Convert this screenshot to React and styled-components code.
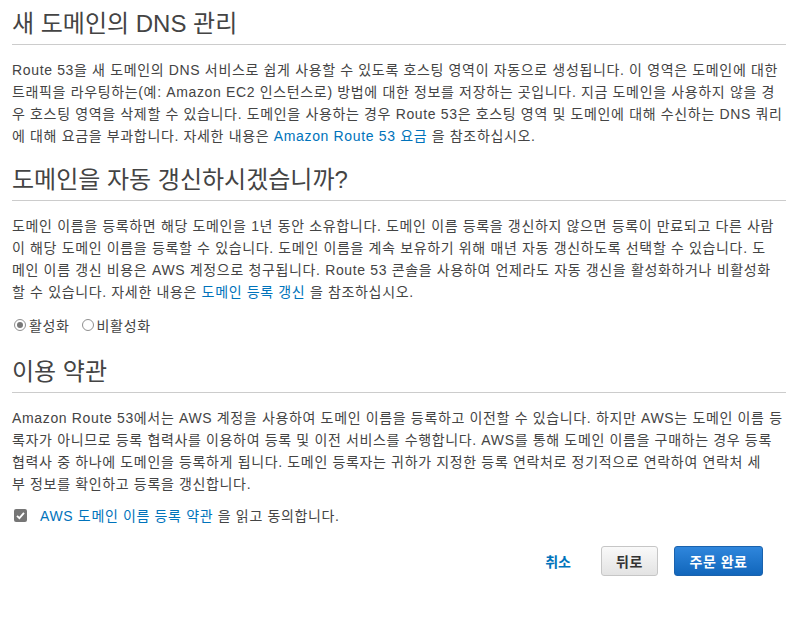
import React, { useState } from "react";
import styled, { createGlobalStyle } from "styled-components";

const GlobalStyle = createGlobalStyle`
  body {
    margin: 0;
    background: #fff;
    font-family: "Liberation Sans", "Noto Sans CJK KR", sans-serif;
    color: #444;
  }
`;

const Page = styled.div`
  padding: 0 19px 40px 12px;
  font-size: 14px;
`;

const Heading = styled.h2`
  margin: ${(p) => (p.$first ? "8px" : p.$gap || "17px")} 0 0;
  padding: 0 0 4px 0;
  border-bottom: 1px solid #ccc;
  font-size: 24px;
  font-weight: 400;
  line-height: 32px;
  color: #444;
`;

// hangul in the reference runs a bit wider than Noto CJK at 14px
const Para = styled.p`
  margin: 14px 0 0;
  line-height: 22px;
  letter-spacing: 0.65px;
`;

const Link = styled.a`
  color: #0073bb;
  text-decoration: none;
  cursor: pointer;
`;

const OptionRow = styled.div`
  display: flex;
  align-items: center;
  gap: 12px;
  margin: 12px 0 0 2px;
  height: 20px;
  letter-spacing: 0.65px;
`;

const RadioLabel = styled.label`
  display: flex;
  align-items: center;
  gap: 3px;
  cursor: pointer;
`;

const RadioDot = styled.span`
  width: 12px;
  height: 12px;
  box-sizing: border-box;
  border-radius: 50%;
  border: 1px solid #8f8f8f;
  background: #fff;
  display: flex;
  align-items: center;
  justify-content: center;

  &::after {
    content: "";
    width: 6px;
    height: 6px;
    border-radius: 50%;
    background: ${(p) => (p.$on ? "#777" : "transparent")};
  }
`;

const CheckRow = styled.label`
  display: flex;
  align-items: center;
  gap: 13px;
  margin: 10px 0 0 2px;
  height: 20px;
  letter-spacing: 0.65px;
  cursor: pointer;
`;

const CheckBox = styled.span`
  width: 13px;
  height: 13px;
  border-radius: 2px;
  background: #767676;
  display: flex;
  align-items: center;
  justify-content: center;
`;

const Actions = styled.div`
  display: flex;
  justify-content: flex-end;
  align-items: center;
  gap: 16px;
  margin-top: 21px;
  padding-right: 23px;
`;

const TextButton = styled.a`
  color: #0073bb;
  font-weight: 700;
  margin-right: 14px;
  cursor: pointer;
`;

const Button = styled.button`
  height: 30px;
  width: ${(p) => p.$w}px;
  padding: 0;
  border-radius: 3px;
  font-family: inherit;
  font-size: 14px;
  font-weight: 700;
  letter-spacing: 0.5px;
  cursor: pointer;
  border: 1px solid ${(p) => (p.$primary ? "#1a62ad" : "#c6c6c6")};
  color: ${(p) => (p.$primary ? "#fff" : "#333")};
  background: ${(p) =>
    p.$primary
      ? "linear-gradient(#2f86dc, #1166bb)"
      : "linear-gradient(#f9f9f9, #e3e3e3)"};
`;

export default function App() {
  const [renew, setRenew] = useState(true);
  const [agree, setAgree] = useState(true);

  return (
    <Page>
      <GlobalStyle />
      <Heading $first>새 도메인의 DNS 관리</Heading>
      <Para>
        Route 53을 새 도메인의 DNS 서비스로 쉽게 사용할 수 있도록 호스팅 영역이 자동으로 생성됩니다. 이 영역은 도메인에 대한<br />
        트래픽을 라우팅하는(예: Amazon EC2 인스턴스로) 방법에 대한 정보를 저장하는 곳입니다. 지금 도메인을 사용하지 않을 경<br />
        우 호스팅 영역을 삭제할 수 있습니다. 도메인을 사용하는 경우 Route 53은 호스팅 영역 및 도메인에 대해 수신하는 DNS 쿼리<br />
        에 대해 요금을 부과합니다. 자세한 내용은 <Link>Amazon Route 53 요금</Link> 을 참조하십시오.
      </Para>

      <Heading>도메인을 자동 갱신하시겠습니까?</Heading>
      <Para>
        도메인 이름을 등록하면 해당 도메인을 1년 동안 소유합니다. 도메인 이름 등록을 갱신하지 않으면 등록이 만료되고 다른 사람<br />
        이 해당 도메인 이름을 등록할 수 있습니다. 도메인 이름을 계속 보유하기 위해 매년 자동 갱신하도록 선택할 수 있습니다. 도<br />
        메인 이름 갱신 비용은 AWS 계정으로 청구됩니다. Route 53 콘솔을 사용하여 언제라도 자동 갱신을 활성화하거나 비활성화<br />
        할 수 있습니다. 자세한 내용은 <Link>도메인 등록 갱신</Link> 을 참조하십시오.
      </Para>
      <OptionRow>
        <RadioLabel onClick={() => setRenew(true)}>
          <RadioDot $on={renew} />
          활성화
        </RadioLabel>
        <RadioLabel onClick={() => setRenew(false)}>
          <RadioDot $on={!renew} />
          비활성화
        </RadioLabel>
      </OptionRow>

      <Heading $gap="21px">이용 약관</Heading>
      <Para>
        Amazon Route 53에서는 AWS 계정을 사용하여 도메인 이름을 등록하고 이전할 수 있습니다. 하지만 AWS는 도메인 이름 등<br />
        록자가 아니므로 등록 협력사를 이용하여 등록 및 이전 서비스를 수행합니다. AWS를 통해 도메인 이름을 구매하는 경우 등록<br />
        협력사 중 하나에 도메인을 등록하게 됩니다. 도메인 등록자는 귀하가 지정한 등록 연락처로 정기적으로 연락하여 연락처 세<br />
        부 정보를 확인하고 등록을 갱신합니다.
      </Para>
      <CheckRow onClick={() => setAgree(!agree)}>
        <CheckBox>
          {agree && (
            <svg width="9" height="9" viewBox="0 0 9 9">
              <path d="M1 4.8 L3.4 7.2 L8 1.8" fill="none" stroke="#fff" strokeWidth="1.8" />
            </svg>
          )}
        </CheckBox>
        <span>
          <Link>AWS 도메인 이름 등록 약관</Link> 을 읽고 동의합니다.
        </span>
      </CheckRow>

      <Actions>
        <TextButton>취소</TextButton>
        <Button $w={57}>뒤로</Button>
        <Button $primary $w={89}>주문 완료</Button>
      </Actions>
    </Page>
  );
}
